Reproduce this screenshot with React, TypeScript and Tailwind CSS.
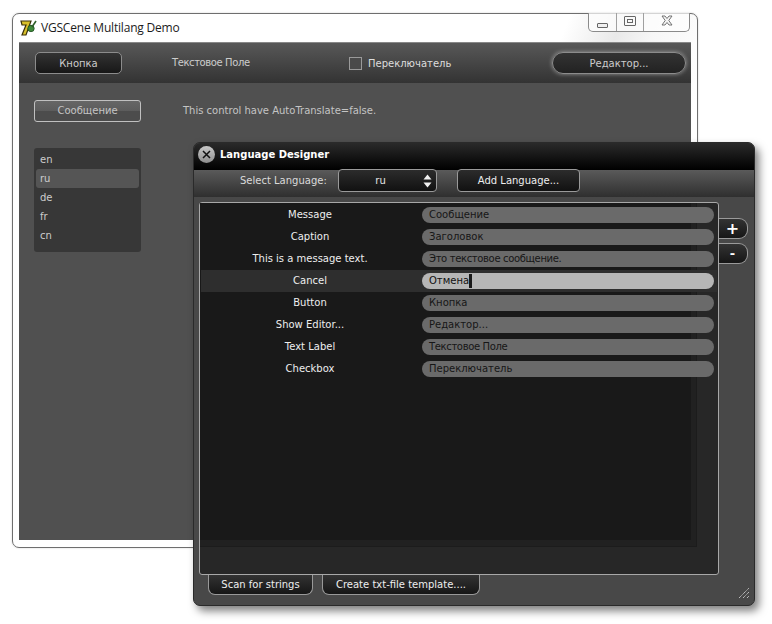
const font = { fontFamily: '"DejaVu Sans", sans-serif' };

const rows = [
  { key: 'Message', value: 'Сообщение', tight: false },
  { key: 'Caption', value: 'Заголовок', tight: false },
  { key: 'This is a message text.', value: 'Это текстовое сообщение.', tight: true },
  { key: 'Cancel', value: 'Отмена', tight: false },
  { key: 'Button', value: 'Кнопка', tight: false },
  { key: 'Show Editor...', value: 'Редактор...', tight: false },
  { key: 'Text Label', value: 'Текстовое Поле', tight: true },
  { key: 'Checkbox', value: 'Переключатель', tight: false },
];

const langs = ['en', 'ru', 'de', 'fr', 'cn'];

function AppIcon() {
  return (
    <svg width="18" height="18" viewBox="0 0 18 18" className="mr-[3px]">
      <path d="M1 2h10l-5 14H2l4-10H2z" fill="#d8c02a" stroke="#3a3008" strokeWidth="1.2" />
      <circle cx="11" cy="9.5" r="3.2" fill="#3f8a3a" stroke="#1d4a1d" strokeWidth="0.8" />
      <path d="M12 8l4-6" stroke="#2f5f2a" strokeWidth="1.6" />
    </svg>
  );
}

function MainWindow() {
  return (
    <div className="absolute left-[12px] top-[13px] w-[686px] h-[535px] border border-[#6e6e6e] rounded-[7px] bg-[linear-gradient(112deg,#ffffff_0%,#ffffff_62%,#e9e9e9_68%,#f6f6f6_72%,#ffffff_80%)] shadow-[0_0_2px_rgba(0,0,0,0.2)]">
      <div className="h-[28px] flex items-center pl-[7px] relative">
        <AppIcon />
        <span className="text-[12px] tracking-[-0.2px] text-[#1c1c1c]" style={{ fontFamily: '"Open Sans", sans-serif' }}>VGSCene Multilang Demo</span>
        <div className="absolute right-[7px] top-[-1px] h-[19px] flex border border-t-0 border-[#8a8a8a] rounded-b-[5px] bg-white/70">
          <div className="w-[28px] flex items-center justify-center border-r border-[#a0a0a0]">
            <div className="w-[11px] h-[5px] mt-[6px] border border-[#666] rounded-[1px] bg-[#f0f0f0]" />
          </div>
          <div className="w-[27px] flex items-center justify-center border-r border-[#a0a0a0]">
            <div className="w-[12px] h-[10px] mb-[3px] border border-[#666] rounded-[1px] flex items-center justify-center">
              <div className="w-[6px] h-[4px] border border-[#666]" />
            </div>
          </div>
          <div className="w-[45px] flex items-center justify-center">
            <svg width="12" height="11" viewBox="0 0 12 11" className="mb-[3px]">
              <path d="M1 1h3l2 2.5L8 1h3L7.8 5.5 11 10H8L6 7.5 4 10H1l3.2-4.5z" fill="#f4f4f4" stroke="#666" strokeWidth="0.9" />
            </svg>
          </div>
        </div>
      </div>
      <div className="mx-[6px] h-[498px] bg-[#505050] border-t border-[#888]" style={font}>
        <div className="h-[40px] flex items-center pl-[16px] pr-[5px] bg-[linear-gradient(#585858,#333333)] text-[10px] text-[#cccccc]">
          <div className="w-[87px] h-[22px] rounded-[5px] border border-[#8c8c8c] flex items-center justify-center bg-[linear-gradient(#333333,#171717)]">Кнопка</div>
          <span className="ml-[50px] w-[77px] pb-[2px] whitespace-nowrap tracking-[-0.4px]">Текстовое Поле</span>
          <div className="ml-[100px] w-[13px] h-[13px] border border-[#9a9a9a] bg-[#4a4a4a]" />
          <span className="ml-[6px] text-[#dddddd]">Переключатель</span>
          <div className="ml-auto w-[134px] h-[22px] rounded-full border border-[#8c8c8c] flex items-center justify-center bg-[linear-gradient(#333333,#222222)] shadow-[0_0_4px_rgba(255,255,255,0.45)]">Редактор...</div>
        </div>
        <div className="pl-[15px] pt-[17px]">
          <div className="flex items-center text-[10px] text-[#c4c4c4]">
            <div className="w-[107px] h-[22px] pb-[2px] rounded-[3px] border border-[#c0c0c0] flex items-center justify-center bg-[linear-gradient(#666666_0%,#5c5c5c_50%,#4c4c4c_50%,#4c4c4c_100%)]">Сообщение</div>
            <span className="ml-[42px] pb-[2px] whitespace-nowrap">This control have AutoTranslate=false.</span>
          </div>
          <div className="mt-[26px] w-[107px] h-[104px] rounded-[3px] bg-[#373737] pt-[2px] px-[2px] text-[10px] text-[#cccccc]">
            {langs.map((l) => (
              <div key={l} className={`h-[19px] flex items-center pl-[4px] rounded-[3px] ${l === 'ru' ? 'bg-[#555555]' : ''}`}>{l}</div>
            ))}
          </div>
        </div>
      </div>
    </div>
  );
}

function Dialog() {
  return (
    <div className="absolute left-[193px] top-[142px] w-[562px] h-[464px] rounded-[7px] bg-[#484848] border border-[#2a2a2a] shadow-[4px_5px_9px_rgba(0,0,0,0.5)]" style={font}>
      <div className="h-[27px] flex items-center pl-[4px] pb-[5px] rounded-t-[6px] bg-[linear-gradient(#2a2a2a,#000000)]">
        <div className="w-[17px] h-[17px] rounded-full bg-[linear-gradient(#c8c8c8,#8e8e8e)] flex items-center justify-center">
          <svg width="9" height="9" viewBox="0 0 9 9"><path d="M1 1l7 7M8 1l-7 7" stroke="#111" strokeWidth="1.5" /></svg>
        </div>
        <span className="ml-[5px] text-[10px] font-bold text-white">Language Designer</span>
      </div>
      <div className="h-[27px] pb-[6px] flex items-center bg-[linear-gradient(#5a5a5a,#2f2f2f)] text-[10px] text-[#dadada]">
        <span className="ml-[46px] w-[90px] whitespace-nowrap">Select Language:</span>
        <div className="ml-[8px] w-[99px] h-[23px] shrink-0 rounded-[4px] border border-[#9a9a9a] bg-[linear-gradient(#2c2c2c,#111111)] flex items-center relative">
          <span className="w-full text-center pr-[14px] text-[#e4e4e4]">ru</span>
          <svg width="9" height="14" viewBox="0 0 9 14" className="absolute right-[4px] top-[4px]"><path d="M4.5 0.5L8.5 5.5H0.5zM4.5 13.5L0.5 8.5H8.5z" fill="#f0f0f0" /></svg>
        </div>
        <div className="ml-[20px] w-[123px] h-[23px] shrink-0 rounded-[4px] border border-[#9a9a9a] bg-[linear-gradient(#2c2c2c,#111111)] flex items-center justify-center text-[#eeeeee]">Add Language...</div>
      </div>
      <div className="flex mt-[5px] ml-[5px]">
        <div className="relative w-[520px] h-[373px] rounded-[3px] border border-[#a8a8a8] bg-[#272727]">
          <div className="absolute left-0 top-0 w-[497px] h-[344px] bg-[#212121] border-r border-b border-[#1c1c1c]">
            <div className="w-[491px] h-[337px] bg-[#191919]" />
          </div>
          <div className="relative pt-[1px] pl-[1px] text-[10px]">
            {rows.map((row) => {
              const active = row.key === 'Cancel';
              return (
                <div key={row.key} className={`h-[22px] w-[516px] flex items-center ${active ? 'bg-[#2e2e2e]' : ''}`}>
                  <span className="w-[218px] pb-[2px] text-center text-[#eeeeee]">{row.key}</span>
                  <div className={`ml-[3px] w-[292px] h-[16px] pb-[2px] rounded-full flex items-center pl-[7px] ${active ? 'bg-[#b6b6b6] text-[#111]' : 'bg-[#6a6a6a] text-[#161616]'} ${row.tight ? 'tracking-[-0.35px]' : ''}`}>
                    {row.value}
                    {active && <div className="w-[3px] h-[14px] mt-[2px] bg-[#1a1a1a]" />}
                  </div>
                </div>
              );
            })}
          </div>
        </div>
        <div className="mt-[16px] flex flex-col gap-[4px] text-white font-bold">
          <div className="w-[29px] h-[21px] pr-[1px] rounded-r-[9px] border border-l-0 border-[#9a9a9a] bg-[linear-gradient(#333333,#161616)] flex items-center justify-center text-[16px] leading-none">+</div>
          <div className="w-[29px] h-[21px] pr-[1px] rounded-r-[9px] border border-l-0 border-[#9a9a9a] bg-[linear-gradient(#333333,#161616)] flex items-center justify-center text-[13px] leading-none">-</div>
        </div>
      </div>
      <div className="flex pl-[14px] gap-[9px] text-[10px] text-[#eeeeee]">
        <div className="w-[105px] h-[20px] rounded-b-[7px] border border-t-0 border-[#999] bg-[linear-gradient(#333333,#161616)] flex items-center justify-center">Scan for strings</div>
        <div className="w-[158px] h-[20px] rounded-b-[7px] border border-t-0 border-[#999] bg-[linear-gradient(#333333,#161616)] flex items-center justify-center">Create txt-file template....</div>
      </div>
      <svg width="12" height="12" viewBox="0 0 12 12" className="absolute right-[4px] bottom-[6px]">
        <path d="M1 11L11 1M5 11l6-6M9 11l2-2" stroke="#cfcfcf" strokeWidth="1" strokeDasharray="1.2 0.6" />
      </svg>
    </div>
  );
}

export default function App() {
  return (
    <div className="relative w-[772px] h-[624px] bg-white overflow-hidden">
      <MainWindow />
      <Dialog />
    </div>
  );
}
